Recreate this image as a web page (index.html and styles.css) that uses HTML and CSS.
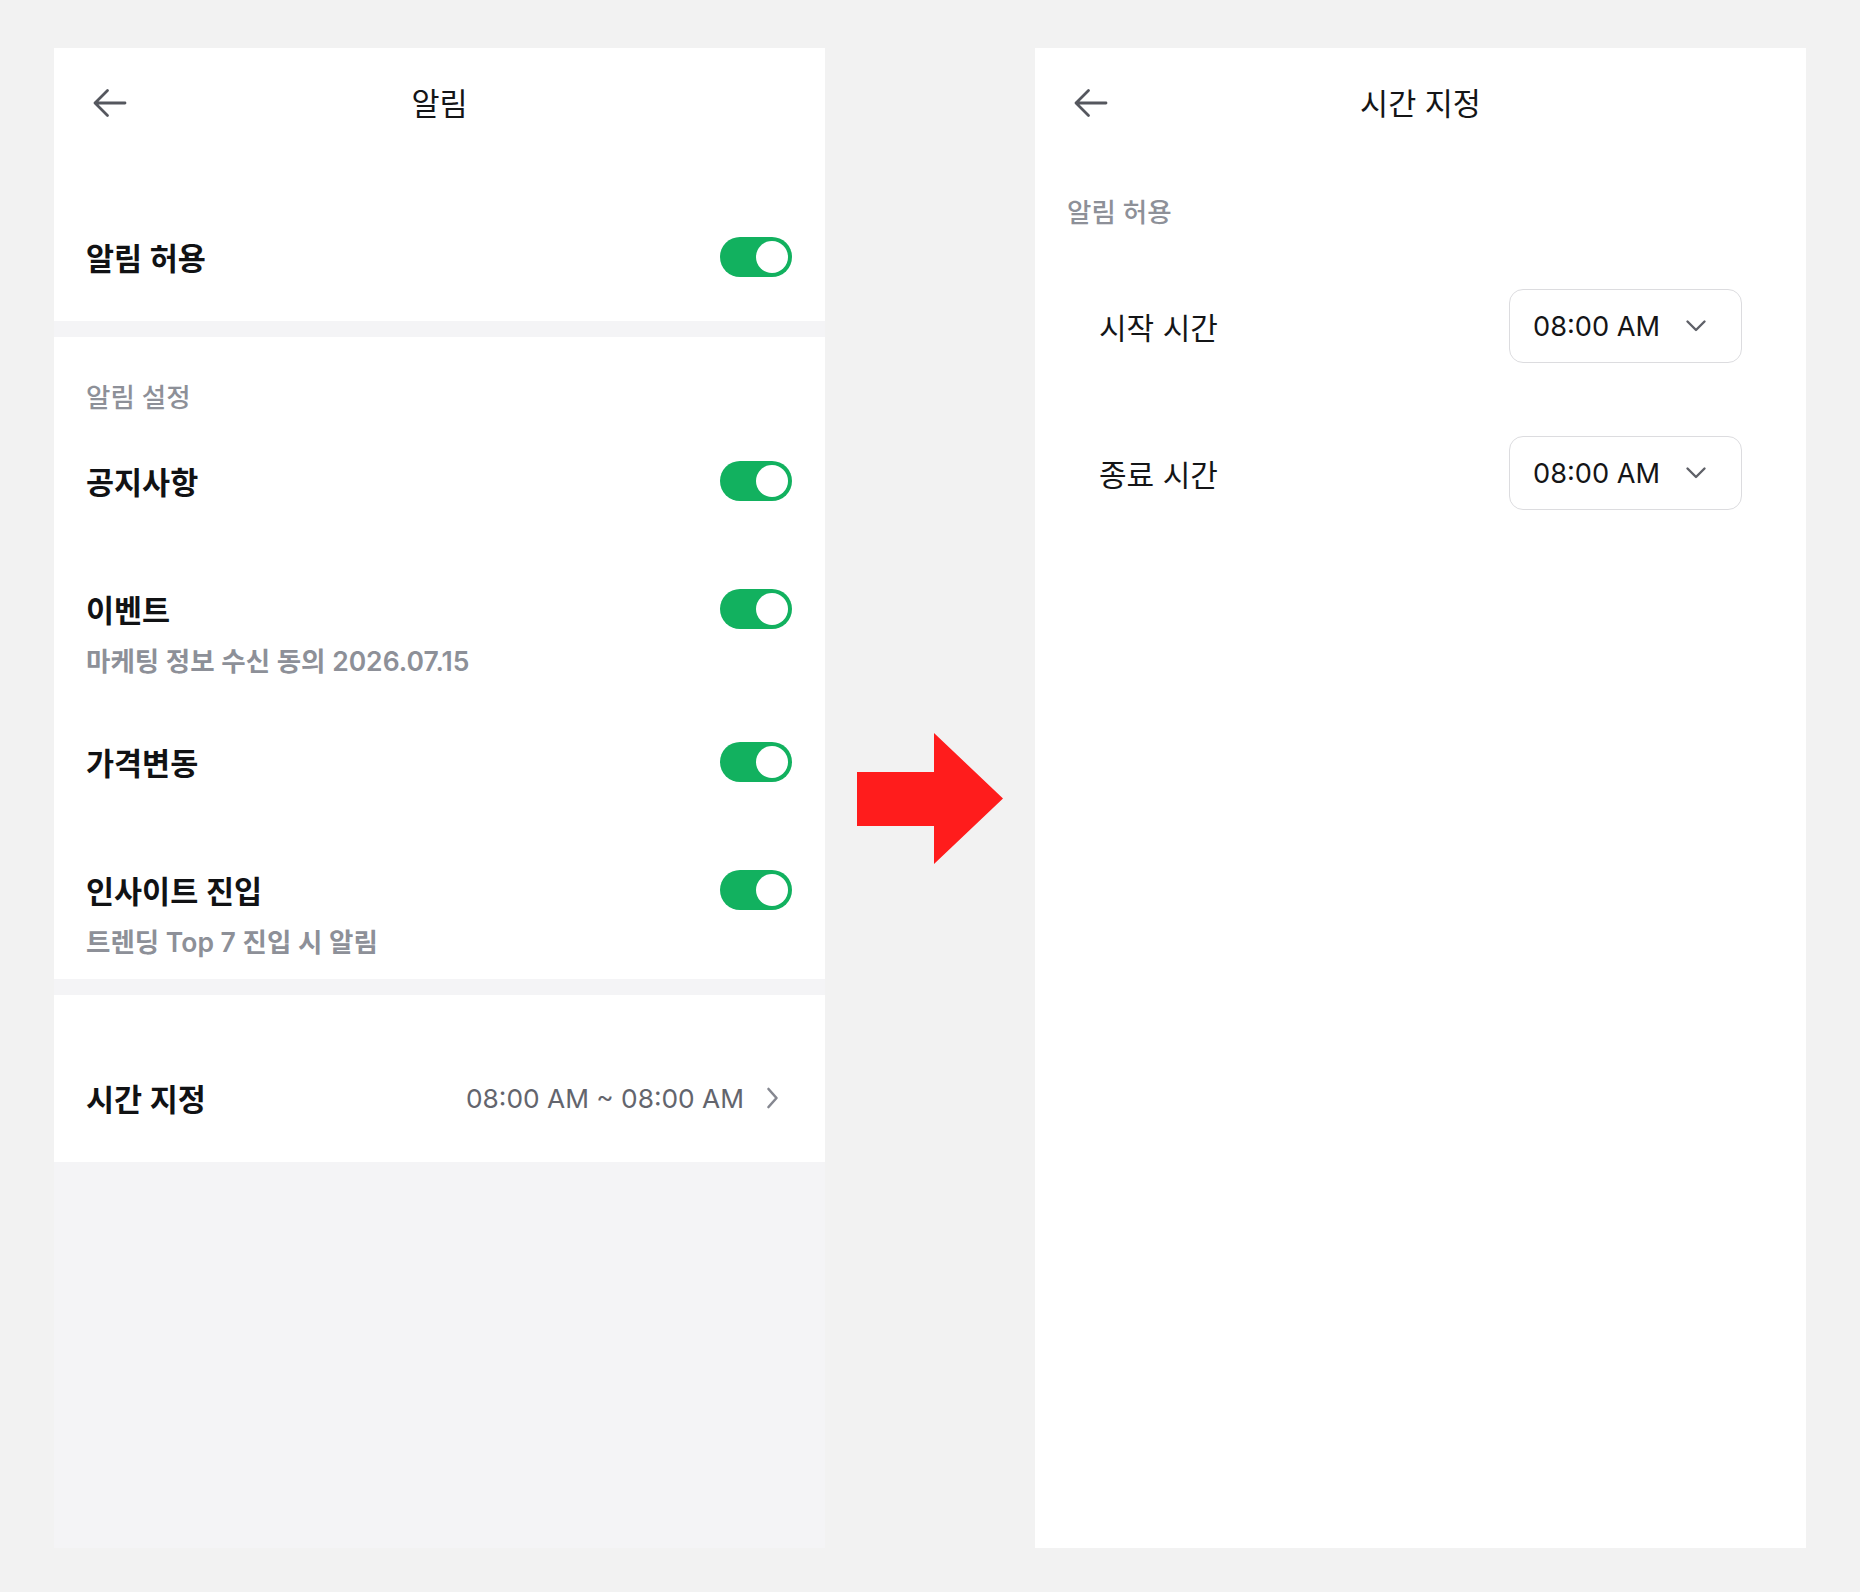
FILE: index.html
```html
<!DOCTYPE html>
<html lang="ko">
<head>
<meta charset="utf-8">
<title>알림 설정</title>
<link rel="stylesheet" href="styles.css">
</head>
<body>
<div class="page">

  <!-- Notification settings screen -->
  <section class="panel panel-settings">
    <div class="block">
      <header class="topbar">
        <svg class="back" width="36" height="32" viewBox="0 0 36 32"><path d="M3 16H33M3 16L15.5 3.5M3 16L15.5 28.5"/></svg>
        <h1 class="title">알림</h1>
      </header>
      <div class="row row-first">
        <div class="row-line">
          <span class="row-title">알림 허용</span>
          <span class="toggle on"><span class="knob"></span></span>
        </div>
      </div>
    </div>

    <div class="block block-list">
      <div class="group-label">알림 설정</div>
      <div class="row">
        <div class="row-line">
          <span class="row-title">공지사항</span>
          <span class="toggle on"><span class="knob"></span></span>
        </div>
      </div>
      <div class="row">
        <div class="row-line">
          <span class="row-title">이벤트</span>
          <span class="toggle on"><span class="knob"></span></span>
        </div>
        <div class="row-sub">마케팅 정보 수신 동의 2026.07.15</div>
      </div>
      <div class="row">
        <div class="row-line">
          <span class="row-title">가격변동</span>
          <span class="toggle on"><span class="knob"></span></span>
        </div>
      </div>
      <div class="row">
        <div class="row-line">
          <span class="row-title">인사이트 진입</span>
          <span class="toggle on"><span class="knob"></span></span>
        </div>
        <div class="row-sub">트렌딩 Top 7 진입 시 알림</div>
      </div>
    </div>

    <div class="block block-time">
      <div class="row">
        <div class="row-line">
          <span class="row-title">시간 지정</span>
          <span class="row-value">
            <span class="time-range">08:00 AM ~ 08:00 AM</span>
            <svg class="chev-right" width="16" height="24" viewBox="0 0 16 24"><path d="M4.5 3L12.5 12L4.5 21"/></svg>
          </span>
        </div>
      </div>
    </div>
  </section>

  <!-- flow arrow between screens -->
  <div class="flow">
    <svg width="146" height="131" viewBox="0 0 146 131"><path d="M0 39H77V0L146 65.5L77 131V93H0Z"/></svg>
  </div>

  <!-- Time range screen -->
  <section class="panel panel-time">
    <header class="topbar">
      <svg class="back" width="36" height="32" viewBox="0 0 36 32"><path d="M3 16H33M3 16L15.5 3.5M3 16L15.5 28.5"/></svg>
      <h1 class="title">시간 지정</h1>
    </header>
    <div class="group-label group-label-time">알림 허용</div>
    <div class="pick-row">
      <span class="pick-label">시작 시간</span>
      <button class="select" type="button">
        <span>08:00 AM</span>
        <svg width="22" height="14" viewBox="0 0 22 14"><path d="M2.5 2.5L11 11L19.5 2.5"/></svg>
      </button>
    </div>
    <div class="pick-row">
      <span class="pick-label">종료 시간</span>
      <button class="select" type="button">
        <span>08:00 AM</span>
        <svg width="22" height="14" viewBox="0 0 22 14"><path d="M2.5 2.5L11 11L19.5 2.5"/></svg>
      </button>
    </div>
  </section>

</div>
</body>
</html>
```

FILE: styles.css
```css
* {
  box-sizing: border-box;
}

html, body {
  margin: 0;
  padding: 0;
}

body {
  background: #f2f2f2;
  font-family: "Inter", "Noto Sans CJK KR", sans-serif;
  color: #111214;
}

.page {
  display: flex;
  align-items: stretch;
  padding: 48px 54px 44px;
  height: 1592px;
}

.panel {
  width: 771px;
  height: 1500px;
  flex: none;
  display: flex;
  flex-direction: column;
}

.panel-settings {
  background: #f4f4f6;
  gap: 16px;
}

.panel-time {
  background: #ffffff;
}

.block {
  background: #ffffff;
}

/* header bar with back arrow and centered title */
.topbar {
  position: relative;
  height: 110px;
  display: flex;
  align-items: center;
  justify-content: center;
}

.back {
  position: absolute;
  left: 38px;
  top: 39px;
  fill: none;
  stroke: #55575e;
  stroke-width: 2.8;
  stroke-linecap: round;
  stroke-linejoin: round;
}

.title {
  margin: 0;
  padding-top: 2px;
  font-size: 30.5px;
  font-weight: 400;
  line-height: 40px;
  color: #141517;
}

/* settings rows */
.row {
  padding: 24px 33px 24px 32px;
}

.row-first {
  margin-top: 35px;
}

.row-line {
  height: 80px;
  display: flex;
  align-items: center;
  justify-content: space-between;
}

.row-title {
  font-size: 30.5px;
  font-weight: 600;
  color: #111214;
}

.row-sub {
  font-size: 26.5px;
  line-height: 25px;
  font-weight: 600;
  color: #8d9098;
}

.block-list {
  padding-top: 40px;
}

.group-label {
  padding-left: 32px;
  font-size: 26.5px;
  line-height: 40px;
  font-weight: 500;
  color: #8d9098;
}

.block-time {
  padding-top: 39px;
}

.row-value {
  display: flex;
  align-items: center;
  gap: 20px;
}

.time-range {
  font-size: 26.3px;
  font-weight: 400;
  color: #63656d;
}

.chev-right {
  margin-right: 12px;
  fill: none;
  stroke: #858790;
  stroke-width: 2.6;
  stroke-linecap: round;
  stroke-linejoin: round;
}

/* toggle switch */
.toggle {
  width: 72px;
  height: 40px;
  border-radius: 20px;
  background: #d6d7db;
  padding: 4px;
  display: flex;
}

.toggle.on {
  background: #12b15f;
  justify-content: flex-end;
}

.knob {
  width: 32px;
  height: 32px;
  border-radius: 50%;
  background: #ffffff;
}

/* arrow between the two screens */
.flow {
  width: 210px;
  flex: none;
  display: flex;
  align-items: center;
  justify-content: center;
}

.flow svg {
  fill: #ff1c1c;
}

/* time picker screen */
.group-label-time {
  margin-top: 37px;
  line-height: 34px;
}

.pick-row {
  display: flex;
  align-items: center;
  justify-content: space-between;
  padding: 36px 64px 37px;
}

.group-label-time + .pick-row {
  margin-top: 24px;
}

.pick-label {
  font-size: 30px;
  font-weight: 400;
  color: #141517;
}

.select {
  width: 233px;
  height: 74px;
  display: flex;
  align-items: center;
  justify-content: space-between;
  padding: 0 34px 0 23px;
  background: #ffffff;
  border: 1.5px solid #dcdcdf;
  border-radius: 14px;
  font-family: "Inter", "Noto Sans CJK KR", sans-serif;
  font-size: 27.2px;
  font-weight: 400;
  color: #141517;
}

.select svg {
  fill: none;
  stroke: #5f6168;
  stroke-width: 2.4;
  stroke-linecap: round;
  stroke-linejoin: round;
}
```
